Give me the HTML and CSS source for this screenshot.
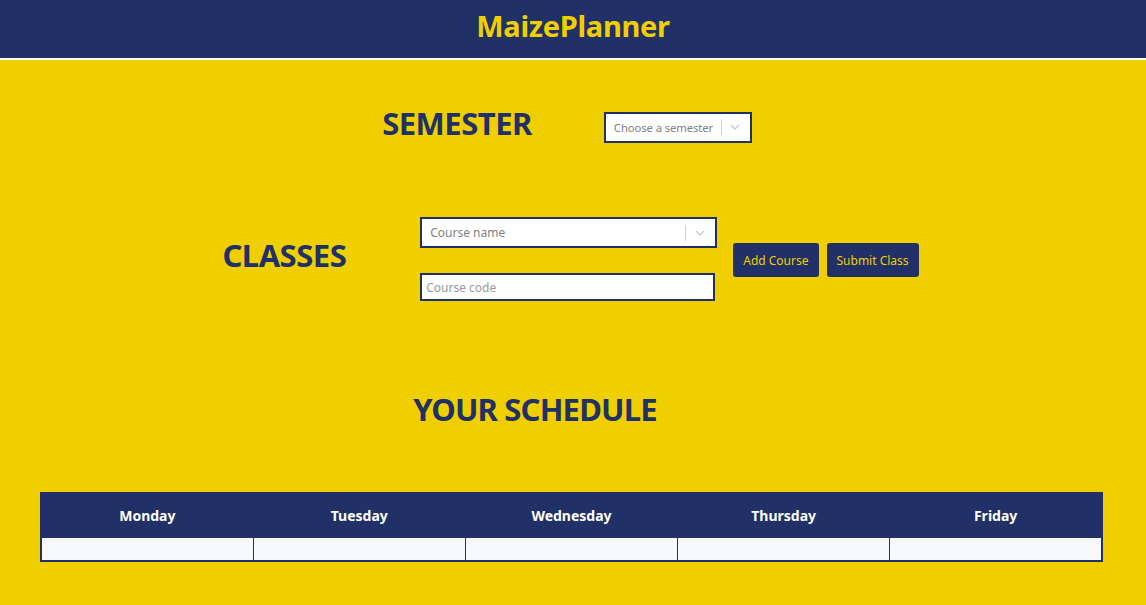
FILE: index.html
```html
<!DOCTYPE html>
<html>
<head>
<meta charset="utf-8">
<link rel="stylesheet" href="styles.css">
</head>
<body>
<header class="topbar"><h1 class="brand">MaizePlanner</h1></header>
<main class="content">
  <section class="row semester-row">
    <h2 class="section-title">SEMESTER</h2>
    <div class="select select-sem">
      <span class="placeholder">Choose a semester</span>
      <span class="indicator"><span class="sep"></span><svg width="10" height="6" viewBox="0 0 10 6"><path d="M1 1l4 4 4-4" fill="none" stroke="#c8c8c8" stroke-width="1.3"/></svg></span>
    </div>
  </section>
  <section class="row classes-row">
    <h2 class="section-title">CLASSES</h2>
    <div class="fields">
      <div class="select select-course">
        <span class="placeholder">Course name</span>
        <span class="indicator"><span class="sep"></span><svg width="10" height="6" viewBox="0 0 10 6"><path d="M1 1l4 4 4-4" fill="none" stroke="#c8c8c8" stroke-width="1.3"/></svg></span>
      </div>
      <input class="text-input" type="text" placeholder="Course code">
    </div>
    <div class="buttons">
      <button class="btn">Add Course</button>
      <button class="btn">Submit Class</button>
    </div>
  </section>
  <h2 class="section-title schedule-title">YOUR SCHEDULE</h2>
  <table class="schedule">
    <thead>
      <tr><th>Monday</th><th>Tuesday</th><th>Wednesday</th><th>Thursday</th><th>Friday</th></tr>
    </thead>
    <tbody>
      <tr><td></td><td></td><td></td><td></td><td></td></tr>
    </tbody>
  </table>
</main>
</body>
</html>
```
FILE: styles.css
```css
* { box-sizing: border-box; }
html, body { margin: 0; padding: 0; }
body {
  background: #efcf00;
  font-family: "Noto Sans", "Open Sans", sans-serif;
  color: #213066;
  height: 605px;
  overflow: hidden;
}
.topbar {
  background: #213066;
  height: 60px;
  border-bottom: 2px solid #ffffff;
  display: flex;
  align-items: center;
  justify-content: center;
  padding-bottom: 8px;
}
.brand {
  margin: 0;
  color: #efcf00;
  font-size: 29px;
  font-weight: 700;
  letter-spacing: -0.3px;
}
.content { padding-top: 38px; }
.row {
  display: flex;
  align-items: center;
  justify-content: center;
}
.section-title {
  margin: 0;
  font-size: 31px;
  font-weight: 700;
  letter-spacing: -0.5px;
  color: #213066;
}
.semester-row { gap: 72px; height: 50px; padding-right: 12px; }
.select {
  background: #fff;
  border: 2px solid #213066;
  display: flex;
  align-items: center;
  justify-content: space-between;
  padding-left: 8px;
  font-size: 12px;
  color: #808080;
  white-space: nowrap;
}
.placeholder { overflow: hidden; }
.select-sem { width: 148px; height: 31px; margin-top: 8px; font-size: 11.3px; letter-spacing: -0.1px; }
.select-sem .indicator { padding-right: 10px; }
.select-sem .sep { margin-left: 5px; margin-right: 8px; }
.select-course { width: 297px; height: 31px; }
.indicator { display: flex; align-items: center; height: 100%; padding-right: 10px; flex-shrink: 0; }
.sep { width: 1px; height: 16px; background: #d0d0d0; margin-right: 9px; }
.classes-row { margin-top: 69px; gap: 0; padding-right: 5px; }
.classes-row .section-title { margin-right: 74px; margin-bottom: 9px; }
.fields { display: flex; flex-direction: column; gap: 25px; }
.text-input {
  width: 295px;
  height: 28px;
  border: 2px solid #213066;
  background: #fff;
  padding: 0 4px;
  font-family: inherit;
  font-size: 12px;
  outline: none;
}
.text-input::placeholder { color: #9a9a9a; }
.buttons { display: flex; gap: 8px; margin-left: 16px; margin-top: 2px; }
.btn {
  background: #213066;
  color: #efcf00;
  border: none;
  border-radius: 3px;
  height: 34px;
  padding: 0 10px;
  font-family: inherit;
  font-size: 12px;
  cursor: pointer;
}
.schedule-title {
  text-align: center;
  padding-right: 76px;
  margin-top: 87px;
  letter-spacing: -0.8px;
}
.schedule {
  margin: 62px 43px 0 40px;
  width: 1063px;
  border-collapse: collapse;
  table-layout: fixed;
  border: 2px solid #213066;
}
.schedule th {
  background: #213066;
  color: #ffffff;
  font-size: 14px;
  font-weight: 700;
  height: 44px;
  border: 1px solid #213066;
}
.schedule td {
  background: #f7f8fa;
  height: 24px;
  border: 1px solid #213066;
}
```
